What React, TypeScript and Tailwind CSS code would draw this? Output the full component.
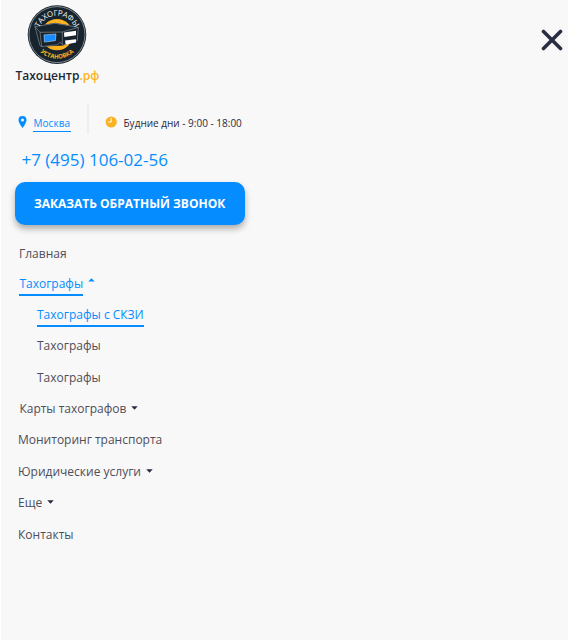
import React from 'react';

type Item = {
  label: string;
  row: string;
  caret?: 'up' | 'down';
  active?: boolean;
};

const items: Item[] = [
  { label: 'Главная', row: 'pl-[18px] h-[30px]' },
  { label: 'Тахографы', row: 'pl-[18.4px] h-[31px]', caret: 'up', active: true },
  { label: 'Тахографы с СКЗИ', row: 'pl-[36px] h-[31px]', active: true },
  { label: 'Тахографы', row: 'pl-[36px] h-[31.4px]' },
  { label: 'Тахографы', row: 'pl-[36px] h-[31.4px]' },
  { label: 'Карты тахографов', row: 'pl-[18.4px] h-[31.4px]', caret: 'down' },
  { label: 'Мониторинг транспорта', row: 'pl-[17px] h-[31.4px]' },
  { label: 'Юридические услуги', row: 'pl-[17px] h-[31.4px]', caret: 'down' },
  { label: 'Еще', row: 'pl-[17px] h-[31.4px]', caret: 'down' },
  { label: 'Контакты', row: 'pl-[17px] h-[31.4px]' },
];

function Logo() {
  return (
    <svg viewBox="0 0 60 60" className="ml-[26px] block size-[60px]">
      <defs>
        <path id="arc-top" d="M11.2 29.500a18.800 18.800 0 0 1 37.600 0" />
        <path id="arc-bottom" d="M5.700 29.500a24.300 24.300 0 0 0 48.600 0" />
      </defs>
      <circle cx="30" cy="29.600" r="29.300" fill="#17232d" />
      <circle cx="30" cy="29.600" r="28" fill="none" stroke="#c5cbcf" strokeWidth=".6" />
      <circle cx="30" cy="29.600" r="15.700" fill="#fcb322" />
      <path d="M8 21.700 28 18.300 51.300 22.300 50.300 35 36.300 40 14.700 41.200Z" fill="#17232d" stroke="#17232d" strokeWidth="1" strokeLinejoin="round" />
      <path d="M8 21.700 28 18.300l23.300 4L35.300 27 13 27.300ZM8 21.700l5 19 1.700 1L13 27.300M14.700 41.700l16-2 2-2.500 3.600 2.800 14-4.500 1-13.200M35.300 27v12" fill="none" stroke="#a8b0b5" strokeWidth=".5" />
      <path d="m17 29.900 12-.9-.6 6.700-11 1.400Z" fill="#168cff" stroke="#dfe8ee" strokeWidth=".5" />
      <path d="m37 27.600 12-1.800v4.400l-11.700 1.900ZM38 35.500l11-1.200v3.300l-10.300 2Z" fill="#fff" />
      <text className="font-['Open_Sans',sans-serif] text-[7.8px]" fill="#f4f6f7" textAnchor="middle">
        <textPath href="#arc-top" startOffset="50%" textLength="45" lengthAdjust="spacing">ТАХОГРАФЫ</textPath>
      </text>
      <text className="font-['Open_Sans',sans-serif] text-[6px] font-bold" fill="#fcb322" textAnchor="middle">
        <textPath href="#arc-bottom" startOffset="50%" textLength="37" lengthAdjust="spacing">УСТАНОВКА</textPath>
      </text>
    </svg>
  );
}

function Caret({ up }: { up?: boolean }) {
  return up ? (
    <svg viewBox="0 0 7 4" className="mb-[9px] ml-[5px] h-[4px] w-[7px]">
      <path d="M.3 3.600 3.500.2l3.200 3.400Z" fill="#058dff" />
    </svg>
  ) : (
    <svg viewBox="0 0 7 4" className="mb-[2px] ml-[5px] h-[4px] w-[7px]">
      <path d="M.3.3h6.400L3.500 3.800Z" fill="#292a40" />
    </svg>
  );
}

export default function App() {
  return (
    <div className="h-[641px] w-[569px] overflow-hidden bg-white px-px pb-px font-['Open_Sans','Noto_Sans',sans-serif]">
      <div className="h-[640px] bg-[#f8f8f8]">
        <header className="flex h-[104px] justify-between pt-[5px]">
          <div>
            <Logo />
            <div className="ml-[14.5px] mt-px text-[12px] leading-[19px] font-semibold whitespace-nowrap text-[#1c2b36]">
              Тахоцентр<span className="text-[#fcb322]">.рф</span>
            </div>
          </div>
          <button aria-label="Закрыть" className="mr-[5px] mt-[24px] size-[22px]">
            <svg viewBox="0 0 22 22" className="block size-[22px]">
              <path d="m2.500 2.500 17 17m0-17-17 17" stroke="#2a2c42" strokeWidth="3.600" strokeLinecap="round" />
            </svg>
          </button>
        </header>

        <div className="flex h-[30px] items-start text-[10px] leading-[14px]">
          <svg viewBox="0 0 8 12" className="ml-[17px] mt-[12px] h-[12px] w-[9px]">
            <path d="M4 0a4 4 0 0 0-4 4c0 3 4 8 4 8s4-5 4-8a4 4 0 0 0-4-4Zm0 5.500a1.500 1.500 0 1 1 0-3 1.500 1.500 0 0 1 0 3Z" fill="#058dff" />
          </svg>
          <a className="ml-[6px] mt-[12px] h-[16px] w-[38px] border-b border-[#058dff] pl-[0.5px] tracking-[0.05px] whitespace-nowrap text-[#058dff]">Москва</a>
          <div className="ml-[16px] h-[30px] w-[2px] bg-[#ededed]" />
          <svg viewBox="0 0 12 12" className="ml-[16px] mt-[12px] size-[12px]">
            <circle cx="6.200" cy="6" r="5.600" fill="#fcb322" />
            <path d="M6.200 2V6H3.200" fill="none" stroke="#fff" strokeWidth="1" />
          </svg>
          <span className="ml-[6.5px] mt-[12px] whitespace-nowrap text-[#292a40]">Будние дни - 9:00 - 18:00</span>
        </div>

        <div className="ml-[20.5px] h-[48px] pt-[14px] text-[17px] leading-[24px] whitespace-nowrap text-[#058dff]">
          +7 (495) 106-02-56
        </div>
        <button className="ml-[14.4px] flex h-[43px] w-[229.4px] items-center justify-center rounded-[10px] bg-[#058dff] pt-px pr-px text-[12px] font-bold whitespace-nowrap text-white shadow-[0_4px_6px_rgba(0,0,0,0.3)]">
          ЗАКАЗАТЬ ОБРАТНЫЙ ЗВОНОК
        </button>

        <nav className="mt-[13.5px] text-[12px] leading-[18px] text-[#4e4e58]">
          {items.map((item, i) => (
            <div key={i} className={`flex items-center whitespace-nowrap ${item.row}`}>
              <a
                className={
                  item.active ? 'mt-[2px] h-[21px] border-b-2 border-[#058dff] text-[#058dff]' : ''
                }
              >
                {item.label}
              </a>
              {item.caret && <Caret up={item.caret === 'up'} />}
            </div>
          ))}
        </nav>
      </div>
    </div>
  );
}
